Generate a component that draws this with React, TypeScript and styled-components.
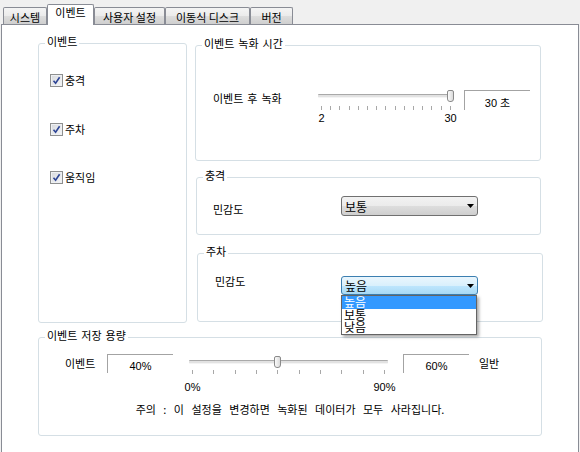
import React from "react";
import styled, { createGlobalStyle } from "styled-components";

const GlobalStyle = createGlobalStyle`
  html, body { margin: 0; padding: 0; }
  body {
    width: 580px;
    height: 452px;
    overflow: hidden;
    background: #f0f0f0;
    font-family: "Noto Sans CJK KR", "Liberation Sans", sans-serif;
    font-size: 11px;
    color: #000;
  }
`;

const Window = styled.div`
  width: 580px;
  height: 452px;
  display: flex;
  flex-direction: column;
`;

const TabBar = styled.div`
  position: relative;
  z-index: 1;
  display: flex;
  align-items: flex-end;
  height: 24px;
  padding-left: 3px;
  box-sizing: border-box;
`;

const Tab = styled.div<{ $active?: boolean; $w: number }>`
  box-sizing: border-box;
  width: ${(p) => p.$w}px;
  height: ${(p) => (p.$active ? 21 : 17)}px;
  margin-bottom: ${(p) => (p.$active ? -1 : 0)}px;
  padding-top: ${(p) => (p.$active ? 1 : 3)}px;
  border: 1px solid #898c95;
  border-bottom: none;
  border-radius: 2px 2px 0 0;
  background: ${(p) =>
    p.$active ? "#fff" : "linear-gradient(#f4f4f4, #ebebeb 50%, #dddddd 51%, #cfcfcf)"};
  text-align: center;
  line-height: 13px;
  white-space: nowrap;
`;

const Panel = styled.div`
  flex: 1;
  margin: 0 1px;
  border: 1px solid #898c95;
  border-bottom: none;
  background: #fff;
  padding: 10px 0 0 36px;
`;

const TopGrid = styled.div`
  display: grid;
  grid-template-columns: 149px 346px;
  column-gap: 8px;
`;

const RightColumn = styled.div`
  display: flex;
  flex-direction: column;
  padding-top: 2px;
`;

const Group = styled.fieldset<{ $h: number; $w?: number; $shift?: number; $gap?: number }>`
  box-sizing: border-box;
  margin: ${(p) => p.$gap ?? 0}px 0 0 ${(p) => p.$shift ?? 0}px;
  padding: 0;
  min-width: 0;
  width: ${(p) => (p.$w ? `${p.$w}px` : "auto")};
  height: ${(p) => p.$h}px;
  border: 1px solid #d5dfe5;
  border-radius: 3px;
`;

const Legend = styled.legend`
  margin-left: 6px;
  padding: 0 2px 4px;
  line-height: 13px;
  font-size: 11px;
  word-spacing: 1.5px;
`;

const CheckList = styled.div`
  display: flex;
  flex-direction: column;
  gap: 35.5px;
  padding: 22px 0 0 11px;
`;

const CheckRow = styled.label`
  display: flex;
  align-items: center;
  gap: 2px;
  line-height: 13px;
`;

const CheckBox = styled.span`
  box-sizing: border-box;
  width: 13px;
  height: 13px;
  border: 1px solid #8e8f8f;
  background: linear-gradient(135deg, #d6d8dc, #f6f7f8);
  box-shadow: inset 0 0 0 1px #eef0f3;
  display: flex;
  align-items: center;
  justify-content: center;
`;

const Row = styled.div<{ $top: number; $left: number }>`
  display: flex;
  align-items: flex-start;
  padding: ${(p) => p.$top}px 0 0 ${(p) => p.$left}px;
`;

const Label = styled.div<{ $w?: number; $dy?: number }>`
  flex: 0 0 ${(p) => (p.$w ? `${p.$w}px` : "auto")};
  margin-top: ${(p) => p.$dy ?? 0}px;
  line-height: 13px;
  white-space: nowrap;
  word-spacing: 1.5px;
`;

const Field = styled.div<{ $w: number; $h: number; $ml?: number }>`
  box-sizing: border-box;
  flex: 0 0 ${(p) => p.$w}px;
  height: ${(p) => p.$h}px;
  margin-left: ${(p) => p.$ml ?? 0}px;
  margin-right: 10px;
  padding-top: 3px;
  border-top: 1px solid #a3a3a3;
  border-left: 1px solid #a3a3a3;
  display: flex;
  align-items: center;
  justify-content: center;
  font-family: "Liberation Sans", "Noto Sans CJK KR", sans-serif;
  font-size: 11px;
  white-space: pre;
`;

const SliderBox = styled.div<{ $w: number; $ml?: number; $mt?: number }>`
  flex: 0 0 ${(p) => p.$w}px;
  margin: ${(p) => p.$mt ?? 0}px 0 0 ${(p) => p.$ml ?? 0}px;
`;

const TrackArea = styled.div`
  position: relative;
  height: 12px;
`;

const Track = styled.div`
  position: absolute;
  left: 0;
  right: 0;
  top: 4px;
  height: 4px;
  border-radius: 1px;
  background: linear-gradient(#a9a9a9 0 1px, #e2e2e2 1px 3px, #f4f4f4 3px);
`;

const Thumb = styled.div`
  position: absolute;
  top: 0;
  box-sizing: border-box;
  width: 7px;
  height: 12px;
  border: 1px solid #8a8a8a;
  border-radius: 2px 2px 3px 3px;
  background: linear-gradient(to right, #fbfbfb, #dadada);
`;

const TickRow = styled.div<{ $gap: number }>`
  display: flex;
  justify-content: space-between;
  padding: 0 3px;
  margin-top: ${(p) => p.$gap}px;
`;

const Tick = styled.span`
  width: 1px;
  height: 4px;
  background: #a8a8a8;
`;

const ScaleRow = styled.div<{ $gap: number }>`
  display: flex;
  justify-content: space-between;
  padding: 0 3px;
  margin-top: ${(p) => p.$gap}px;
  font-family: "Liberation Sans", sans-serif;
  font-size: 11px;
  line-height: 12px;
`;

const ScaleLabel = styled.span`
  width: 1px;
  display: flex;
  justify-content: center;
  white-space: nowrap;
`;

const SelectWrap = styled.div`
  position: relative;
  z-index: 2;
`;

const Select = styled.div<{ $open?: boolean }>`
  box-sizing: border-box;
  width: 137px;
  height: ${(p) => (p.$open ? 19 : 20)}px;
  padding: 0 3px 0 3px;
  border: 1px solid ${(p) => (p.$open ? "#3c7fb1" : "#707070")};
  border-radius: 3px;
  background: ${(p) =>
    p.$open
      ? "linear-gradient(#eaf6fd, #d9f0fc 50%, #bee6fd 51%, #a7d9f5)"
      : "linear-gradient(#f2f2f2, #ebebeb 50%, #dddddd 51%, #cfcfcf)"};
  display: flex;
  align-items: center;
  justify-content: space-between;
  font-size: 12px;
  line-height: 13px;
`;

const DropList = styled.div`
  position: absolute;
  top: 100%;
  left: 0;
  box-sizing: border-box;
  width: 136px;
  border: 1px solid #646464;
  background: #fff;
  box-shadow: 2px 2px 3px rgba(0, 0, 0, 0.35);
`;

const Option = styled.div<{ $selected?: boolean }>`
  padding-left: 2px;
  font-size: 12px;
  line-height: 12.5px;
  background: ${(p) => (p.$selected ? "#3399ff" : "transparent")};
  color: ${(p) => (p.$selected ? "#fff" : "#000")};
`;

const Note = styled.div`
  margin-top: 10px;
  text-align: center;
  line-height: 13px;
  word-spacing: 5px;
`;

function Check({ label }: { label: string }) {
  return (
    <CheckRow>
      <CheckBox>
        <svg width="9" height="9" viewBox="0 0 9 9">
          <path d="M1.5 4.8 L3.6 7.2 L7.6 1.2" fill="none" stroke="#2d4495" strokeWidth="1.6" />
        </svg>
      </CheckBox>
      {label}
    </CheckRow>
  );
}

function Arrow() {
  return (
    <svg width="7" height="4" viewBox="0 0 7 4">
      <polygon points="0,0 7,0 3.5,4" fill="#000" />
    </svg>
  );
}

type SliderProps = {
  width: number;
  min: number;
  max: number;
  value: number;
  ticks: number;
  minLabel: string;
  maxLabel: string;
  tickGap: number;
  labelGap: number;
  ml?: number;
  mt?: number;
};

function Slider({ width, min, max, value, ticks, minLabel, maxLabel, tickGap, labelGap, ml, mt }: SliderProps) {
  const pct = (value - min) / (max - min);
  const left = 3 + pct * (width - 7) - 3;
  return (
    <SliderBox $w={width} $ml={ml} $mt={mt}>
      <TrackArea>
        <Track />
        <Thumb style={{ left }} />
      </TrackArea>
      <TickRow $gap={tickGap}>
        {Array.from({ length: ticks }, (_, i) => (
          <Tick key={i} />
        ))}
      </TickRow>
      <ScaleRow $gap={labelGap}>
        <ScaleLabel>{minLabel}</ScaleLabel>
        <ScaleLabel>{maxLabel}</ScaleLabel>
      </ScaleRow>
    </SliderBox>
  );
}

const tabs = [
  { label: "시스템", w: 44 },
  { label: "이벤트", w: 47, active: true },
  { label: "사용자 설정", w: 71 },
  { label: "이동식 디스크", w: 85 },
  { label: "버전", w: 43 },
];

export default function App() {
  return (
    <Window>
      <GlobalStyle />
      <TabBar>
        {tabs.map((t) => (
          <Tab key={t.label} $w={t.w} $active={t.active}>
            {t.label}
          </Tab>
        ))}
      </TabBar>
      <Panel>
        <TopGrid>
          <Group $h={288}>
            <Legend>이벤트</Legend>
            <CheckList>
              <Check label="충격" />
              <Check label="주차" />
              <Check label="움직임" />
            </CheckList>
          </Group>
          <RightColumn>
            <Group $h={124}>
              <Legend>이벤트 녹화 시간</Legend>
              <Row $top={36} $left={17}>
                <Label $w={105} $dy={2}>이벤트 후 녹화</Label>
                <Slider width={136} min={2} max={30} value={30} ticks={15} minLabel="2" maxLabel="30" tickGap={4} labelGap={2} />
                <Field $w={66} $h={20} $ml={10}>30 초</Field>
              </Row>
            </Group>
            <Group $h={66} $w={345} $shift={1} $gap={8}>
              <Legend>충격</Legend>
              <Row $top={10} $left={16}>
                <Label $w={128} $dy={7}>민감도</Label>
                <Select>
                  보통
                  <Arrow />
                </Select>
              </Row>
            </Group>
            <Group $h={77} $w={346} $shift={2} $gap={10}>
              <Legend>주차</Legend>
              <Row $top={14} $left={17}>
                <Label $w={126} $dy={-1}>민감도</Label>
                <SelectWrap>
                  <Select $open>
                    높음
                    <Arrow />
                  </Select>
                  <DropList>
                    <Option $selected>높음</Option>
                    <Option>보통</Option>
                    <Option>낮음</Option>
                  </DropList>
                </SelectWrap>
              </Row>
            </Group>
          </RightColumn>
        </TopGrid>
        <Group $h={107} $w={504} $gap={6}>
          <Legend>이벤트 저장 용량</Legend>
          <Row $top={8} $left={26}>
            <Label $w={42} $dy={3}>이벤트</Label>
            <Field $w={66} $h={19}>40%</Field>
            <Slider width={199} min={0} max={90} value={40} ticks={10} minLabel="0%" maxLabel="90%" tickGap={2} labelGap={7} ml={6} mt={2} />
            <Field $w={66} $h={19} $ml={15}>60%</Field>
            <Label $dy={3}>일반</Label>
          </Row>
          <Note>주의 : 이 설정을 변경하면 녹화된 데이터가 모두 사라집니다.</Note>
        </Group>
      </Panel>
    </Window>
  );
}
